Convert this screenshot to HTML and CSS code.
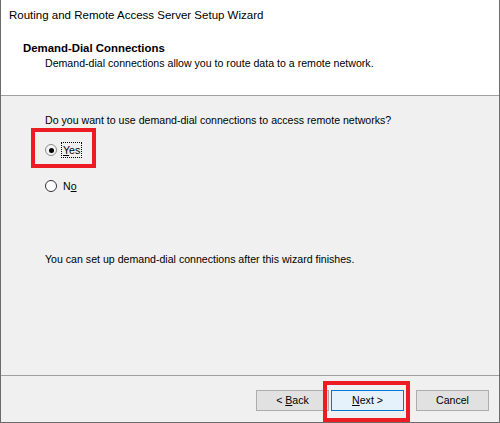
FILE: index.html
```html
<!DOCTYPE html>
<html>
<head>
<meta charset="utf-8">
<link rel="stylesheet" href="styles.css">
</head>
<body>
<div class="window">
  <div class="titlebar">Routing and Remote Access Server Setup Wizard</div>
  <div class="header">
    <div class="h-title">Demand-Dial Connections</div>
    <div class="h-sub">Demand-dial connections allow you to route data to a remote network.</div>
  </div>
  <div class="content">
    <div class="question">Do you want to use demand-dial connections to access remote networks?</div>
    <div class="radio-row yes-row">
      <span class="radio checked"><span class="dot"></span></span>
      <span class="label focus"><u>Y</u>es</span>
    </div>
    <div class="radio-row no-row">
      <span class="radio"></span>
      <span class="label">N<u>o</u></span>
    </div>
    <div class="note">You can set up demand-dial connections after this wizard finishes.</div>
  </div>
  <div class="footer">
    <div class="btn back">&lt; <u>B</u>ack</div>
    <div class="btn next"><u>N</u>ext &gt;</div>
    <div class="btn cancel">Cancel</div>
  </div>
  <div class="mark mark-yes"></div>
  <div class="mark mark-next"></div>
</div>
</body>
</html>
```
FILE: styles.css
```css
html, body {
  margin: 0;
  padding: 0;
  background: #f0f0f0;
}
.window {
  position: relative;
  width: 500px;
  height: 423px;
  box-sizing: border-box;
  border-left: 1px solid #6b6b6b;
  border-right: 1px solid #6b6b6b;
  border-bottom: 1px solid #6b6b6b;
  display: flex;
  flex-direction: column;
  font-family: "Liberation Sans", Arial, sans-serif;
  font-size: 10.6px;
  color: #000;
  overflow: hidden;
}
.titlebar {
  height: 30px;
  line-height: 30px;
  background: #fff;
  padding-left: 8px;
  font-size: 11.5px;
  flex: none;
}
.header {
  background: #fff;
  height: 66px;
  box-sizing: border-box;
  padding-top: 11px;
  border-bottom: 1px solid #a0a0a0;
  flex: none;
}
.h-title {
  padding-left: 22px;
  font-weight: bold;
  font-size: 11.4px;
  line-height: 14px;
}
.h-sub {
  padding-left: 44px;
  line-height: 14px;
  margin-top: 1px;
}
.content {
  flex: 1;
  padding-left: 44px;
  padding-top: 17px;
  background: #f0f0f0;
}
.question {
  line-height: 14px;
}
.radio-row {
  display: flex;
  align-items: center;
  height: 16px;
}
.yes-row {
  margin-top: 15px;
}
.no-row {
  margin-top: 20px;
}
.radio {
  width: 12px;
  height: 12px;
  box-sizing: border-box;
  border-radius: 50%;
  border: 1px solid #333;
  background: #fff;
  display: flex;
  align-items: center;
  justify-content: center;
  margin-right: 4px;
}
.radio.checked {
  border-color: #8c8c8c;
  background: #f4f4f4;
}
.dot {
  width: 5px;
  height: 5px;
  border-radius: 50%;
  background: #000;
}
.label {
  line-height: 14px;
  padding: 0 1px;
  border: 1px dotted transparent;
}
.label.focus {
  border-color: #000;
}
.note {
  margin-top: 58px;
  line-height: 14px;
}
.footer {
  flex: none;
  height: 47px;
  box-sizing: border-box;
  border-top: 1px solid #a0a0a0;
  display: flex;
  justify-content: flex-end;
  padding-top: 14px;
  padding-right: 10px;
  background: #f0f0f0;
}
.btn {
  width: 73px;
  height: 21px;
  box-sizing: border-box;
  border: 1px solid #adadad;
  background: #e1e1e1;
  text-align: center;
  line-height: 19px;
}
.btn.next {
  margin-left: 2px;
  border-color: #0078d7;
  background: #e5f1fb;
}
.btn.cancel {
  margin-left: 12px;
}
.mark {
  position: absolute;
  box-sizing: border-box;
  border: 4px solid #ed1c24;
}
.mark-yes {
  left: 30px;
  top: 128px;
  width: 65px;
  height: 40px;
}
.mark-next {
  left: 322px;
  top: 381px;
  width: 87px;
  height: 41px;
}
```
